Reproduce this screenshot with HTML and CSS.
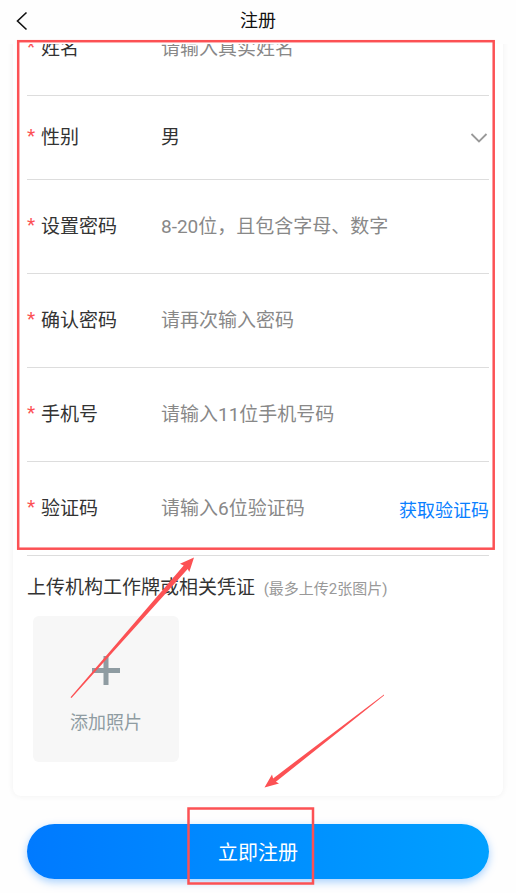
FILE: index.html
```html
<!DOCTYPE html>
<html lang="zh-CN">
<head>
    <meta charset="UTF-8">
    <meta name="viewport" content="width=device-width, initial-scale=1.0">
    <title>注册</title>
    <link rel="stylesheet" href="styles.css">
</head>
<body>
    <!-- 顶部导航 -->
    <header class="navbar">
        <button type="button" class="back" aria-label="返回">
            <svg width="12" height="20" viewBox="0 0 12 20"><path d="M10.500 1.500 L1.500 10 L10.500 18.500" fill="none" stroke="#111" stroke-width="1.600"/></svg>
        </button>
        <h1>注册</h1>
    </header>

    <form>
        <!-- 表单内容，已滚动到第一行 -->
        <div class="scroll-area">
            <div class="card">
                <div class="row">
                    <label for="name">姓名</label>
                    <input type="text" id="name" placeholder="请输入真实姓名">
                </div>
                <div class="row row-select">
                    <label for="gender">性别</label>
                    <select id="gender">
                        <option selected>男</option>
                        <option>女</option>
                    </select>
                    <svg class="arrow-down" width="18" height="12" viewBox="0 0 18 12"><path d="M1.500 2 L9 9.500 L16.500 2" fill="none" stroke="#999" stroke-width="1.800"/></svg>
                </div>
                <div class="row">
                    <label for="password">设置密码</label>
                    <input type="password" id="password" placeholder="8-20位，且包含字母、数字">
                </div>
                <div class="row">
                    <label for="confirm">确认密码</label>
                    <input type="password" id="confirm" placeholder="请再次输入密码">
                </div>
                <div class="row">
                    <label for="phone">手机号</label>
                    <input type="tel" id="phone" placeholder="请输入11位手机号码">
                </div>
                <div class="row">
                    <label for="code">验证码</label>
                    <input type="text" id="code" placeholder="请输入6位验证码">
                    <button type="button" class="get-code">获取验证码</button>
                </div>

                <!-- 上传凭证 -->
                <h2>上传机构工作牌或相关凭证 <small>(最多上传2张图片)</small></h2>
                <button type="button" class="upload">
                    <svg width="28" height="30" viewBox="0 0 28 30"><path d="M0 14.500 H28 M14 0 V29" fill="none" stroke="#8f9ca2" stroke-width="5"/></svg>
                    <span>添加照片</span>
                </button>
            </div>
        </div>

        <button type="submit" class="submit">立即注册</button>
    </form>

    <!-- 红色标注 -->
    <svg class="marks" viewBox="0 0 516 893" aria-hidden="true">
        <g fill="none" stroke="#fc5154" stroke-width="2.500">
            <rect x="18.200" y="41.200" width="475.500" height="507.500"/>
            <rect x="188.500" y="808.500" width="124.500" height="75"/>
        </g>
        <g fill="#fc5154">
            <path d="M70.500 697.300 L183.700 565.400 L180 563.800 L194 557.500 L189.300 572 L187.700 568.900 L71.500 698 Z"/>
            <path d="M384 694.500 L273.100 778.400 L272 774.500 L264.500 787.500 L279 783.500 L275.900 781.800 L384 695.500 Z"/>
        </g>
    </svg>
</body>
</html>
```
FILE: styles.css
```css
* {
    box-sizing: border-box;
}

body {
    position: relative;
    margin: 0;
    min-height: 100vh;
    overflow-x: hidden;
    background-color: #fefefe;
    color: #333;
    font-family: Roboto, "Noto Sans CJK SC", sans-serif;
    font-size: 19px;
}

button,
input,
select {
    margin: 0;
    padding: 0;
    border: none;
    background: none;
    color: inherit;
    font: inherit;
    outline: none;
}

button {
    cursor: pointer;
}

/* 顶部导航 */
.navbar {
    display: grid;
    grid-template-columns: 44px 1fr 44px;
    align-items: center;
    height: 44px;
    padding-bottom: 2px;
}

.navbar h1 {
    margin: 0;
    color: #111;
    font-size: 18px;
    font-weight: 400;
    line-height: 24px;
    text-align: center;
}

.back {
    display: flex;
    justify-content: center;
}

/* 表单卡片 */
.scroll-area {
    overflow: hidden;
    padding: 0 13px 8px;
}

.card {
    margin-top: -42px;
    padding: 0 14px 34px;
    border-radius: 8px;
    background-color: #fff;
    box-shadow: 0 0 6px rgba(0, 0, 0, 0.06);
}

.row {
    display: flex;
    align-items: center;
    height: 94px;
    border-bottom: 1px solid #ddd;
}

.row label {
    width: 134px;
    line-height: 28px;
}

.row label::before {
    content: "*";
    display: inline-block;
    width: 14px;
    color: #fc5154;
    line-height: 1;
    vertical-align: 2px;
}

.row input,
.row select {
    flex: 1;
    min-width: 0;
    height: 28px;
}

.row input::placeholder {
    color: #888;
    opacity: 1;
}

.row-select {
    height: 84px;
}

.row-select select {
    appearance: none;
}

.arrow-down {
    margin-right: 1px;
}

.get-code {
    color: #0a80ff;
    font-size: 18px;
}

/* 上传凭证 */
.card h2 {
    margin: 0;
    padding-top: 4px;
    font-size: 19px;
    font-weight: 400;
    line-height: 56px;
}

.card small {
    margin-left: 4px;
    color: #999;
    font-size: 15px;
    line-height: 1;
}

.upload {
    display: flex;
    flex-direction: column;
    align-items: center;
    gap: 24px;
    width: 146px;
    height: 146px;
    margin-left: 6px;
    padding-top: 40px;
    border-radius: 6px;
    background-color: #f7f7f7;
    color: #8f9ca2;
    font-size: 18px;
    line-height: 26px;
}

/* 提交按钮 */
.submit {
    display: block;
    width: calc(100% - 54px);
    height: 55px;
    margin: 20px auto 14px;
    border-radius: 28px;
    background: linear-gradient(90deg, #007aff, #00a0ff);
    box-shadow: 0 3px 8px rgba(0, 122, 255, 0.35);
    color: #fff;
    font-size: 20px;
}

/* 标注层 */
.marks {
    position: absolute;
    top: 0;
    left: 0;
    width: 100%;
    pointer-events: none;
}
```
